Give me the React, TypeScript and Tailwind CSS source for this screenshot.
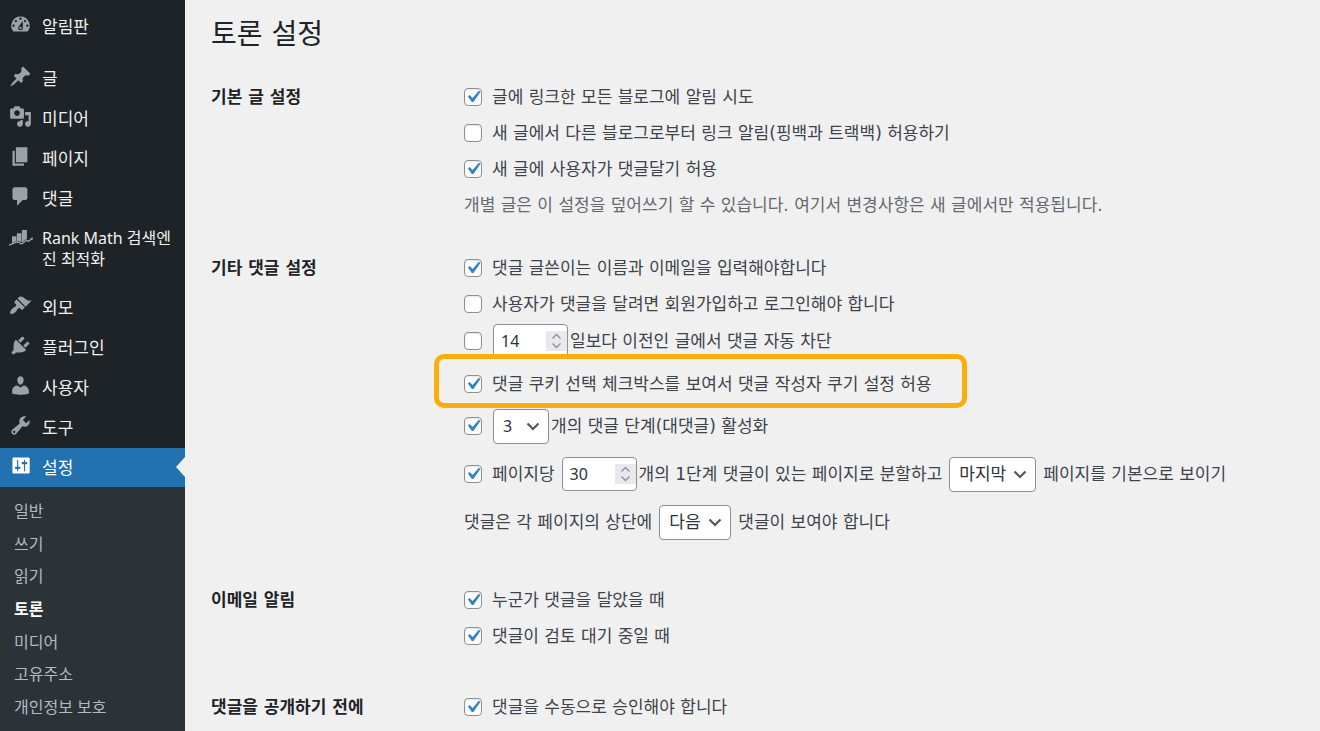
import type { ReactNode } from "react";

const icons = {
  dashboard:
    "M3.76 16h12.48A7.998 7.998 0 0 0 10 3a7.998 7.998 0 0 0-6.24 13zM10 4c.55 0 1 .45 1 1s-.45 1-1 1-1-.45-1-1 .45-1 1-1zM6 6c.55 0 1 .45 1 1s-.45 1-1 1-1-.45-1-1 .45-1 1-1zm8 0c.55 0 1 .45 1 1s-.45 1-1 1-1-.45-1-1 .45-1 1-1zm-5.37 5.55L12 7v6c0 1.1-.9 2-2 2s-2-.9-2-2c0-.57.24-1.08.63-1.45zM4 10c.55 0 1 .45 1 1s-.45 1-1 1-1-.45-1-1 .45-1 1-1zm12 0c.55 0 1 .45 1 1s-.45 1-1 1-1-.45-1-1 .45-1 1-1zm-5 3c0-.55-.45-1-1-1s-1 .45-1 1 .45 1 1 1 1-.45 1-1z",
  post: "M10.44 3.02l1.82-1.82 6.36 6.35-1.83 1.82c-1.05-.68-2.48-.57-3.41.36l-.75.75c-.92.93-1.04 2.35-.35 3.41l-1.83 1.82-2.41-2.41-2.8 2.79c-.42.42-3.38 2.71-3.8 2.29s1.86-3.39 2.28-3.81l2.79-2.79L4.1 9.36l1.83-1.82c1.05.69 2.48.57 3.4-.36l.75-.75c.93-.92 1.05-2.35.36-3.41z",
  media:
    "M13 11V4c0-.55-.45-1-1-1h-1.67L9 1H5L3.67 3H2c-.55 0-1 .45-1 1v7c0 .55.45 1 1 1h10c.55 0 1-.45 1-1zM7 4.5c1.38 0 2.5 1.12 2.5 2.5S8.38 9.5 7 9.5 4.5 8.38 4.5 7 5.62 4.5 7 4.5zM14 6h5v10.5c0 1.38-1.12 2.5-2.5 2.5S14 17.88 14 16.5s1.12-2.5 2.5-2.5c.17 0 .34.02.5.05V9h-3V6zm-4 8.05V13h2v3.5c0 1.38-1.12 2.5-2.5 2.5S7 17.88 7 16.5 8.12 14 9.5 14c.17 0 .34.02.5.05z",
  page: "M6 15V2h10v13H6zm-1 1h8v2H3V5h2v11z",
  comments: "M5 2h9c1.1 0 2 .9 2 2v7c0 1.1-.9 2-2 2h-2l-5 5v-5H5c-1.1 0-2-.9-2-2V4c0-1.1.9-2 2-2z",
  rank: "M2.600 9.800h3.800v4.200l-3.800 1.600zM6.800 7.200h4v7.800L7.800 13.600l-1 .3zM11.200 4.400h4.400v7.600l-4.400 3.200zM-.2 16.900l7.600-3 3.500 1.900 4.500-3.200 1.500.9 2.100-1.500-.7-.8 2.700-.3-.8 2.600-.6-.6-2.700 2-1.500-.9-4.400 3.100-3.700-1.900-7.200 2.800z",
  appearance:
    "M14.48 11.06L7.41 3.99l1.5-1.5c.5-.56 2.3-.47 3.51.32 1.21.8 1.43 1.28 2.91 2.1 1.18.64 2.45 1.26 4.45.85zm-.71.71L6.7 4.7 4.93 6.47c-.39.39-.39 1.02 0 1.41l1.06 1.06c.39.39.39 1.03 0 1.42-.6.6-1.43 1.11-2.21 1.69-.35.26-.7.53-1.01.84C1.43 14.23.4 16.08 1.4 17.07c.99 1 2.84-.03 4.18-1.36.31-.31.58-.66.85-1.02.57-.78 1.08-1.61 1.69-2.21.39-.39 1.02-.39 1.41 0l1.06 1.06c.39.39 1.02.39 1.41 0z",
  plugins:
    "M13.11 4.36L9.87 7.6 8 5.73l3.24-3.24c.35-.34 1.05-.2 1.56.32.52.51.66 1.21.31 1.55zm-8 1.77l.91-1.12 9.01 9.01-1.19.84c-.71.71-2.63 1.16-3.82 1.16H6.14L4.9 17.26c-.59.59-1.54.59-2.12 0-.59-.58-.59-1.53 0-2.12l1.24-1.24v-3.88c0-1.13.4-3.19 1.09-3.89zm7.26 3.97l3.24-3.24c.34-.35 1.04-.21 1.55.31.52.51.66 1.21.31 1.55l-3.24 3.25z",
  users:
    "M10 9.25c-2.27 0-2.73-3.44-2.73-3.44C7 4.02 7.82 2 9.97 2c2.16 0 2.98 2.02 2.71 3.81 0 0-.41 3.44-2.68 3.44zm0 2.57L12.72 10c2.39 0 4.52 2.33 4.52 4.53v2.49s-3.65 1.13-7.24 1.13c-3.65 0-7.24-1.13-7.24-1.13v-2.49c0-2.25 1.94-4.48 4.47-4.48z",
  tools:
    "M16.68 9.77c-1.34 1.34-3.3 1.67-4.95.99l-5.41 6.52c-.99.99-2.59.99-3.58 0s-.99-2.59 0-3.57l6.52-5.42c-.68-1.65-.35-3.61.99-4.95 1.28-1.28 3.12-1.62 4.72-1.06l-2.89 2.89 2.82 2.82 2.86-2.87c.53 1.58.18 3.39-1.08 4.65zM3.81 16.21c.4.39 1.04.39 1.43 0 .4-.4.4-1.04 0-1.43-.39-.4-1.03-.4-1.43 0-.39.39-.39 1.03 0 1.43z",
  settings:
    "M18 16V4c0-.55-.45-1-1-1H4c-.55 0-1 .45-1 1v12c0 .55.45 1 1 1h13c.55 0 1-.45 1-1zM8 11h1c.55 0 1 .45 1 1s-.45 1-1 1H8v1.5c0 .28-.22.5-.5.5s-.5-.22-.5-.5V13H6c-.55 0-1-.45-1-1s.45-1 1-1h1V5.5c0-.28.22-.5.5-.5s.5.22.5.5V11zm5-2h-1c-.55 0-1-.45-1-1s.45-1 1-1h1V5.5c0-.28.22-.5.5-.5s.5.22.5.5V7h1c.55 0 1 .45 1 1s-.45 1-1 1h-1v5.5c0 .28-.22.5-.5.5s-.5-.22-.5-.5V9z",
};

type IconName = keyof typeof icons;

function MenuItem({ icon, active = false, children }: { icon: IconName; active?: boolean; children: ReactNode }) {
  return (
    <li className={active ? "relative bg-[#2271b1]" : ""}>
      <a
        href="#"
        aria-current={active ? "true" : undefined}
        className={`flex gap-[10px] pr-[10px] pl-[9px] text-[17px] leading-[21px] ${active ? "h-[39px] text-white" : "min-h-10 text-[#f0f0f1]"}`}
      >
        <svg
          viewBox="0 0 20 20"
          aria-hidden="true"
          className={`mt-[6px] size-[23px] shrink-0 overflow-visible ${active ? "fill-white" : "fill-[#9ca2a7]"}`}
        >
          <path fillRule="evenodd" d={icons[icon]} />
        </svg>
        <span className="py-[9px] break-all">{children}</span>
      </a>
      {active && (
        <svg viewBox="0 0 9 20" aria-hidden="true" className="absolute top-[9px] right-0 h-5 w-[9px] fill-[#f0f0f1]">
          <path d="M9 0v20L0 10z" />
        </svg>
      )}
    </li>
  );
}

const submenu = ["일반", "쓰기", "읽기", "토론", "미디어", "고유주소", "개인정보 보호"];

function Sidebar() {
  return (
    <nav
      aria-label="관리자 메뉴"
      className="flex w-[185px] shrink-0 flex-col bg-[#1d2327] pt-[7px] font-['Noto_Sans','Noto_Sans_CJK_KR',sans-serif]"
    >
      <ul className="mb-3">
        <MenuItem icon="dashboard">알림판</MenuItem>
      </ul>
      <ul className="mb-[9px]">
        <MenuItem icon="post">글</MenuItem>
        <MenuItem icon="media">미디어</MenuItem>
        <MenuItem icon="page">페이지</MenuItem>
        <MenuItem icon="comments">댓글</MenuItem>
        <MenuItem icon="rank">
          <span className="block text-base leading-[21px]">Rank Math 검색엔진 최적화</span>
        </MenuItem>
      </ul>
      <ul>
        <MenuItem icon="appearance">외모</MenuItem>
        <MenuItem icon="plugins">플러그인</MenuItem>
        <MenuItem icon="users">사용자</MenuItem>
        <MenuItem icon="tools">도구</MenuItem>
        <MenuItem icon="settings" active>
          설정
        </MenuItem>
      </ul>
      <div className="grow bg-[#2c3338] py-2">
        <ul className="grid h-[228px] grid-rows-7">
          {submenu.map((name) => (
            <li key={name} className="flex items-center">
              <a
                href="#"
                className={`grow px-[14px] text-base leading-6 ${name === "토론" ? "font-bold text-white" : "text-[#b5bac0]"}`}
              >
                {name}
              </a>
            </li>
          ))}
        </ul>
      </div>
    </nav>
  );
}

function Checkbox({ id, checked = false }: { id: string; checked?: boolean }) {
  return (
    <span className="relative flex size-[18px] shrink-0">
      <input
        type="checkbox"
        id={id}
        defaultChecked={checked}
        className="peer size-[18px] appearance-none rounded-[4px] border border-[#8c8f94] bg-white shadow-[inset_0_1px_2px_rgba(0,0,0,0.1)]"
      />
      <svg
        viewBox="0 0 20 20"
        aria-hidden="true"
        className="pointer-events-none absolute -top-[3px] -left-[3px] hidden size-6 fill-[#3582c4] peer-checked:block"
      >
        <path d="M14.83 4.89l1.34.94-5.81 8.38H9.02L5.78 9.67l1.34-1.25 2.57 2.4z" />
      </svg>
    </span>
  );
}

function CheckRow({ id, checked, children }: { id: string; checked?: boolean; children: ReactNode }) {
  return (
    <div className="flex h-9 items-center gap-[10px]">
      <Checkbox id={id} checked={checked} />
      <label htmlFor={id}>{children}</label>
    </div>
  );
}

function NumberBox({ label, value }: { label: string; value: number }) {
  return (
    <span className="relative flex h-[34px] w-[75px] shrink-0">
      <input
        type="number"
        aria-label={label}
        defaultValue={value}
        className="w-full [appearance:textfield] rounded-[4px] border border-[#8c8f94] bg-white pl-[7px] font-['Noto_Sans',sans-serif] text-base text-[#2c3338]"
      />
      <svg
        viewBox="0 0 21 20"
        aria-hidden="true"
        className="pointer-events-none absolute top-[7px] right-px h-5 w-[21px] bg-[#e9e9ed] fill-none stroke-[#8f8f9d]"
      >
        <path d="M6.500 7.500l4-4 4 4M6.500 12.500l4 4 4-4" strokeWidth="1.4" />
      </svg>
    </span>
  );
}

function SelectBox({ label, options, width, text }: { label: string; options: string[]; width: string; text: string }) {
  return (
    <span className={`relative flex h-[35px] shrink-0 ${width}`}>
      <select
        aria-label={label}
        className={`w-full appearance-none rounded-[4px] border border-[#8c8f94] bg-white pl-[9px] font-['Noto_Sans','Noto_Sans_CJK_KR',sans-serif] text-[#2c3338] ${text}`}
      >
        {options.map((option) => (
          <option key={option}>{option}</option>
        ))}
      </select>
      <svg
        viewBox="0 0 14 10"
        aria-hidden="true"
        className="pointer-events-none absolute top-[13px] right-[9px] h-[10px] w-[14px] fill-none stroke-[#50575e]"
      >
        <path d="M1.500 1.500L7 7l5.500-5.500" strokeWidth="2.200" />
      </svg>
    </span>
  );
}

function Section({ title, className, children }: { title: string; className: string; children: ReactNode }) {
  return (
    <section className={`grid grid-cols-[253px_1fr] ${className}`}>
      <h2 className="text-[17px] leading-9 font-bold text-[#1d2327]">{title}</h2>
      <div>{children}</div>
    </section>
  );
}

export default function App() {
  return (
    <div className="flex h-screen min-h-[520px] overflow-hidden bg-[#f0f0f1]">
      <Sidebar />
      <main className="grow overflow-hidden pl-[26px] font-['DejaVu_Sans','Noto_Sans_CJK_KR',sans-serif] text-[17px] leading-6 whitespace-nowrap text-[#3c434a]">
        <h1 className="pt-[15px] text-[28px] leading-10 text-[#1d2327]">토론 설정</h1>
        <form>
          <Section title="기본 글 설정" className="mt-6">
            <CheckRow id="pingback" checked>
              글에 링크한 모든 블로그에 알림 시도
            </CheckRow>
            <CheckRow id="trackback">새 글에서 다른 블로그로부터 링크 알림(핑백과 트랙백) 허용하기</CheckRow>
            <CheckRow id="allow-comments" checked>
              새 글에 사용자가 댓글달기 허용
            </CheckRow>
            <p className="leading-9 text-[#646970]">
              개별 글은 이 설정을 덮어쓰기 할 수 있습니다. 여기서 변경사항은 새 글에서만 적용됩니다.
            </p>
          </Section>

          <Section title="기타 댓글 설정" className="mt-[27px]">
            <CheckRow id="require-name" checked>
              댓글 글쓴이는 이름과 이메일을 입력해야합니다
            </CheckRow>
            <CheckRow id="require-login">사용자가 댓글을 달려면 회원가입하고 로그인해야 합니다</CheckRow>
            <div className="flex h-[38px] items-center">
              <Checkbox id="close-old" />
              <span className="ml-[11px] flex items-center gap-[2px]">
                <NumberBox label="일수" value={14} />
                <label htmlFor="close-old">일보다 이전인 글에서 댓글 자동 차단</label>
              </span>
            </div>
            <div className="relative flex h-12 w-fit items-center gap-[10px]">
              <Checkbox id="cookies" checked />
              <label htmlFor="cookies">댓글 쿠키 선택 체크박스를 보여서 댓글 작성자 쿠기 설정 허용</label>
              <span className="pointer-events-none absolute -top-[6px] -right-[35px] bottom-0 -left-[30px] rounded-[10px] border-[5px] border-[#faad0c]" />
            </div>
            <div className="flex h-9 items-center">
              <Checkbox id="threads" checked />
              <span className="ml-[11px] flex items-center gap-[2px]">
                <SelectBox label="댓글 단계" options={["3", "4", "5"]} width="w-14" text="text-base" />
                <label htmlFor="threads">개의 댓글 단계(대댓글) 활성화</label>
              </span>
            </div>
            <div className="flex h-[60px] items-center gap-[7px]">
              <span className="flex items-center gap-[10px]">
                <Checkbox id="paged" checked />
                <label htmlFor="paged">페이지당</label>
              </span>
              <span className="flex items-center gap-[2px]">
                <NumberBox label="페이지당 댓글 수" value={30} />
                <span>개의 1단계 댓글이 있는 페이지로 분할하고</span>
              </span>
              <SelectBox label="기본 페이지" options={["마지막", "처음"]} width="w-[87px]" text="text-[17px]" />
              <span>페이지를 기본으로 보이기</span>
            </div>
            <div className="flex h-9 items-center gap-[7px]">
              <span>댓글은 각 페이지의 상단에</span>
              <SelectBox label="댓글 순서" options={["다음", "이전"]} width="w-[72px]" text="text-[17px]" />
              <span>댓글이 보여야 합니다</span>
            </div>
          </Section>

          <Section title="이메일 알림" className="mt-[42px]">
            <CheckRow id="mail-new" checked>
              누군가 댓글을 달았을 때
            </CheckRow>
            <CheckRow id="mail-hold" checked>
              댓글이 검토 대기 중일 때
            </CheckRow>
          </Section>

          <Section title="댓글을 공개하기 전에" className="mt-[35px]">
            <CheckRow id="manual" checked>
              댓글을 수동으로 승인해야 합니다
            </CheckRow>
          </Section>
        </form>
      </main>
    </div>
  );
}
